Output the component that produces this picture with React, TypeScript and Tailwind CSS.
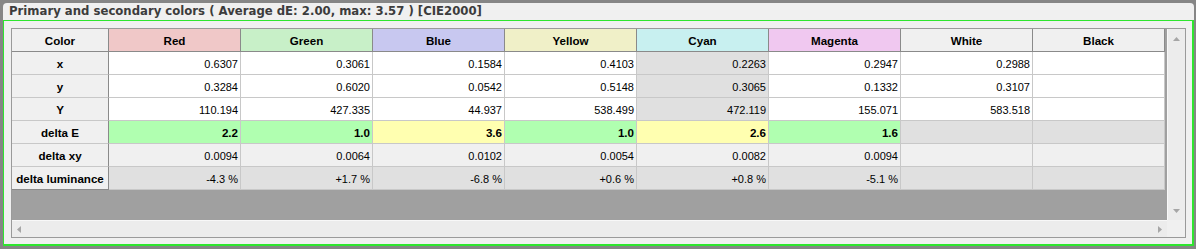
import React from "react";

type Col = {
  name: string;
  head: string;
  x: string;
  y: string;
  Y: string;
  dE: string;
  dEBg: string;
  dxy: string;
  dl: string;
  xyBg: string;
};

const cols: Col[] = [
  { name: "Red", head: "bg-[#f0c8c8]", x: "0.6307", y: "0.3284", Y: "110.194", dE: "2.2", dEBg: "bg-[#b0ffb0]", dxy: "0.0094", dl: "-4.3 %", xyBg: "bg-white" },
  { name: "Green", head: "bg-[#c8f0c8]", x: "0.3061", y: "0.6020", Y: "427.335", dE: "1.0", dEBg: "bg-[#b0ffb0]", dxy: "0.0064", dl: "+1.7 %", xyBg: "bg-white" },
  { name: "Blue", head: "bg-[#c8c8f0]", x: "0.1584", y: "0.0542", Y: "44.937", dE: "3.6", dEBg: "bg-[#ffffb0]", dxy: "0.0102", dl: "-6.8 %", xyBg: "bg-white" },
  { name: "Yellow", head: "bg-[#f0f0c8]", x: "0.4103", y: "0.5148", Y: "538.499", dE: "1.0", dEBg: "bg-[#b0ffb0]", dxy: "0.0054", dl: "+0.6 %", xyBg: "bg-white" },
  { name: "Cyan", head: "bg-[#c8f0f0]", x: "0.2263", y: "0.3065", Y: "472.119", dE: "2.6", dEBg: "bg-[#ffffb0]", dxy: "0.0082", dl: "+0.8 %", xyBg: "bg-[#e0e0e0]" },
  { name: "Magenta", head: "bg-[#f0c8f0]", x: "0.2947", y: "0.1332", Y: "155.071", dE: "1.6", dEBg: "bg-[#b0ffb0]", dxy: "0.0094", dl: "-5.1 %", xyBg: "bg-white" },
  { name: "White", head: "bg-[#f0f0f0]", x: "0.2988", y: "0.3107", Y: "583.518", dE: "", dEBg: "bg-[#e0e0e0]", dxy: "", dl: "", xyBg: "bg-white" },
  { name: "Black", head: "bg-[#f0f0f0]", x: "", y: "", Y: "", dE: "", dEBg: "bg-[#e0e0e0]", dxy: "", dl: "", xyBg: "bg-white" },
];

const rows: { label: string; get: (c: Col) => string; bg: (c: Col) => string; bold?: boolean }[] = [
  { label: "x", get: (c) => c.x, bg: (c) => c.xyBg },
  { label: "y", get: (c) => c.y, bg: (c) => c.xyBg },
  { label: "Y", get: (c) => c.Y, bg: (c) => c.xyBg },
  { label: "delta E", get: (c) => c.dE, bg: (c) => c.dEBg, bold: true },
  { label: "delta xy", get: (c) => c.dxy, bg: () => "bg-[#f0f0f0]" },
  { label: "delta luminance", get: (c) => c.dl, bg: () => "bg-[#e0e0e0]" },
];

function Arrow({ dir }: { dir: "up" | "down" | "left" | "right" }) {
  const pts = {
    up: "0,4 7,4 3.5,0",
    down: "0,0 7,0 3.5,4",
    left: "4,0 4,7 0,3.5",
    right: "0,0 0,7 4,3.5",
  }[dir];
  const vertical = dir === "up" || dir === "down";
  return (
    <svg width={vertical ? 7 : 4} height={vertical ? 4 : 7} viewBox={vertical ? "0 0 7 4" : "0 0 4 7"}>
      <polygon points={pts} fill="#a6a6a6" />
    </svg>
  );
}

export default function App() {
  return (
    <div className="w-[1196px] h-[249px] bg-[#868686] pt-[3px] pl-[3px] pr-[2px] pb-[3px]">
      <div className="h-full bg-[#f0f0f0] rounded-t-[4px] flex flex-col">
        <div
          className="h-[17px] pl-[6px] pt-px flex items-center text-[11.7px] font-bold text-[#3c3c3c] whitespace-nowrap"
          style={{ fontFamily: '"DejaVu Sans", Verdana, sans-serif' }}
        >
          Primary and secondary colors ( Average dE: 2.00, max: 3.57 ) [CIE2000]
        </div>
        <div className="flex-1 min-h-0 border-l border-t border-r-2 border-b-2 border-[#2ee62e] pt-[7px] pl-[7px] pr-[6px] pb-[6px]">
          <div
            className="h-full border border-[#9a9a9a] flex text-[11px] text-black"
            style={{ fontFamily: '"Liberation Sans", Arial, sans-serif' }}
          >
            <div className="flex-1 min-w-0 flex flex-col">
              <div className="flex-1 bg-[#a0a0a0] overflow-hidden">
                <div className="flex text-[11.6px]">
                  <div className="w-[97px] h-[23px] shrink-0 pt-[2px] flex items-center justify-center font-bold bg-[#f0f0f0] border-r border-b border-[#8a8a8a]">
                    Color
                  </div>
                  {cols.map((c) => (
                    <div
                      key={c.name}
                      className={`w-[132px] h-[23px] shrink-0 pt-[2px] flex items-center justify-center font-bold border-r border-b border-[#8a8a8a] ${c.head}`}
                    >
                      {c.name}
                    </div>
                  ))}
                </div>
                {rows.map((r, i) => (
                  <div key={r.label} className="flex">
                    <div
                      className={`w-[97px] h-[23px] shrink-0 pt-[2px] flex items-center justify-center text-[11.6px] font-bold bg-[#f0f0f0] border-r border-r-[#8a8a8a] border-b ${
                        i === rows.length - 1 ? "border-b-[#8a8a8a]" : "border-b-[#c8c8c8]"
                      }`}
                    >
                      {r.label}
                    </div>
                    {cols.map((c) => (
                      <div
                        key={c.name}
                        className={`w-[132px] h-[23px] shrink-0 pt-[2px] flex items-center justify-end pr-[2px] border-r border-b border-[#c8c8c8] ${r.bg(c)} ${
                          r.bold ? "font-bold text-[11.6px]" : ""
                        }`}
                      >
                        {r.get(c)}
                      </div>
                    ))}
                  </div>
                ))}
              </div>
              <div className="h-[17px] bg-[#ececec] border-t border-[#f8f8f8] flex items-center justify-between px-[5px]">
                <Arrow dir="left" />
                <Arrow dir="right" />
              </div>
            </div>
            <div className="w-[18px] shrink-0 flex flex-col bg-[#f0f0f0]">
              <div className="flex-1 bg-[#ececec] border-l border-[#f8f8f8] flex flex-col items-center justify-between pt-[8px] pb-[7px]">
                <Arrow dir="up" />
                <Arrow dir="down" />
              </div>
              <div className="h-[17px] bg-[#f0f0f0]" />
            </div>
          </div>
        </div>
      </div>
    </div>
  );
}
